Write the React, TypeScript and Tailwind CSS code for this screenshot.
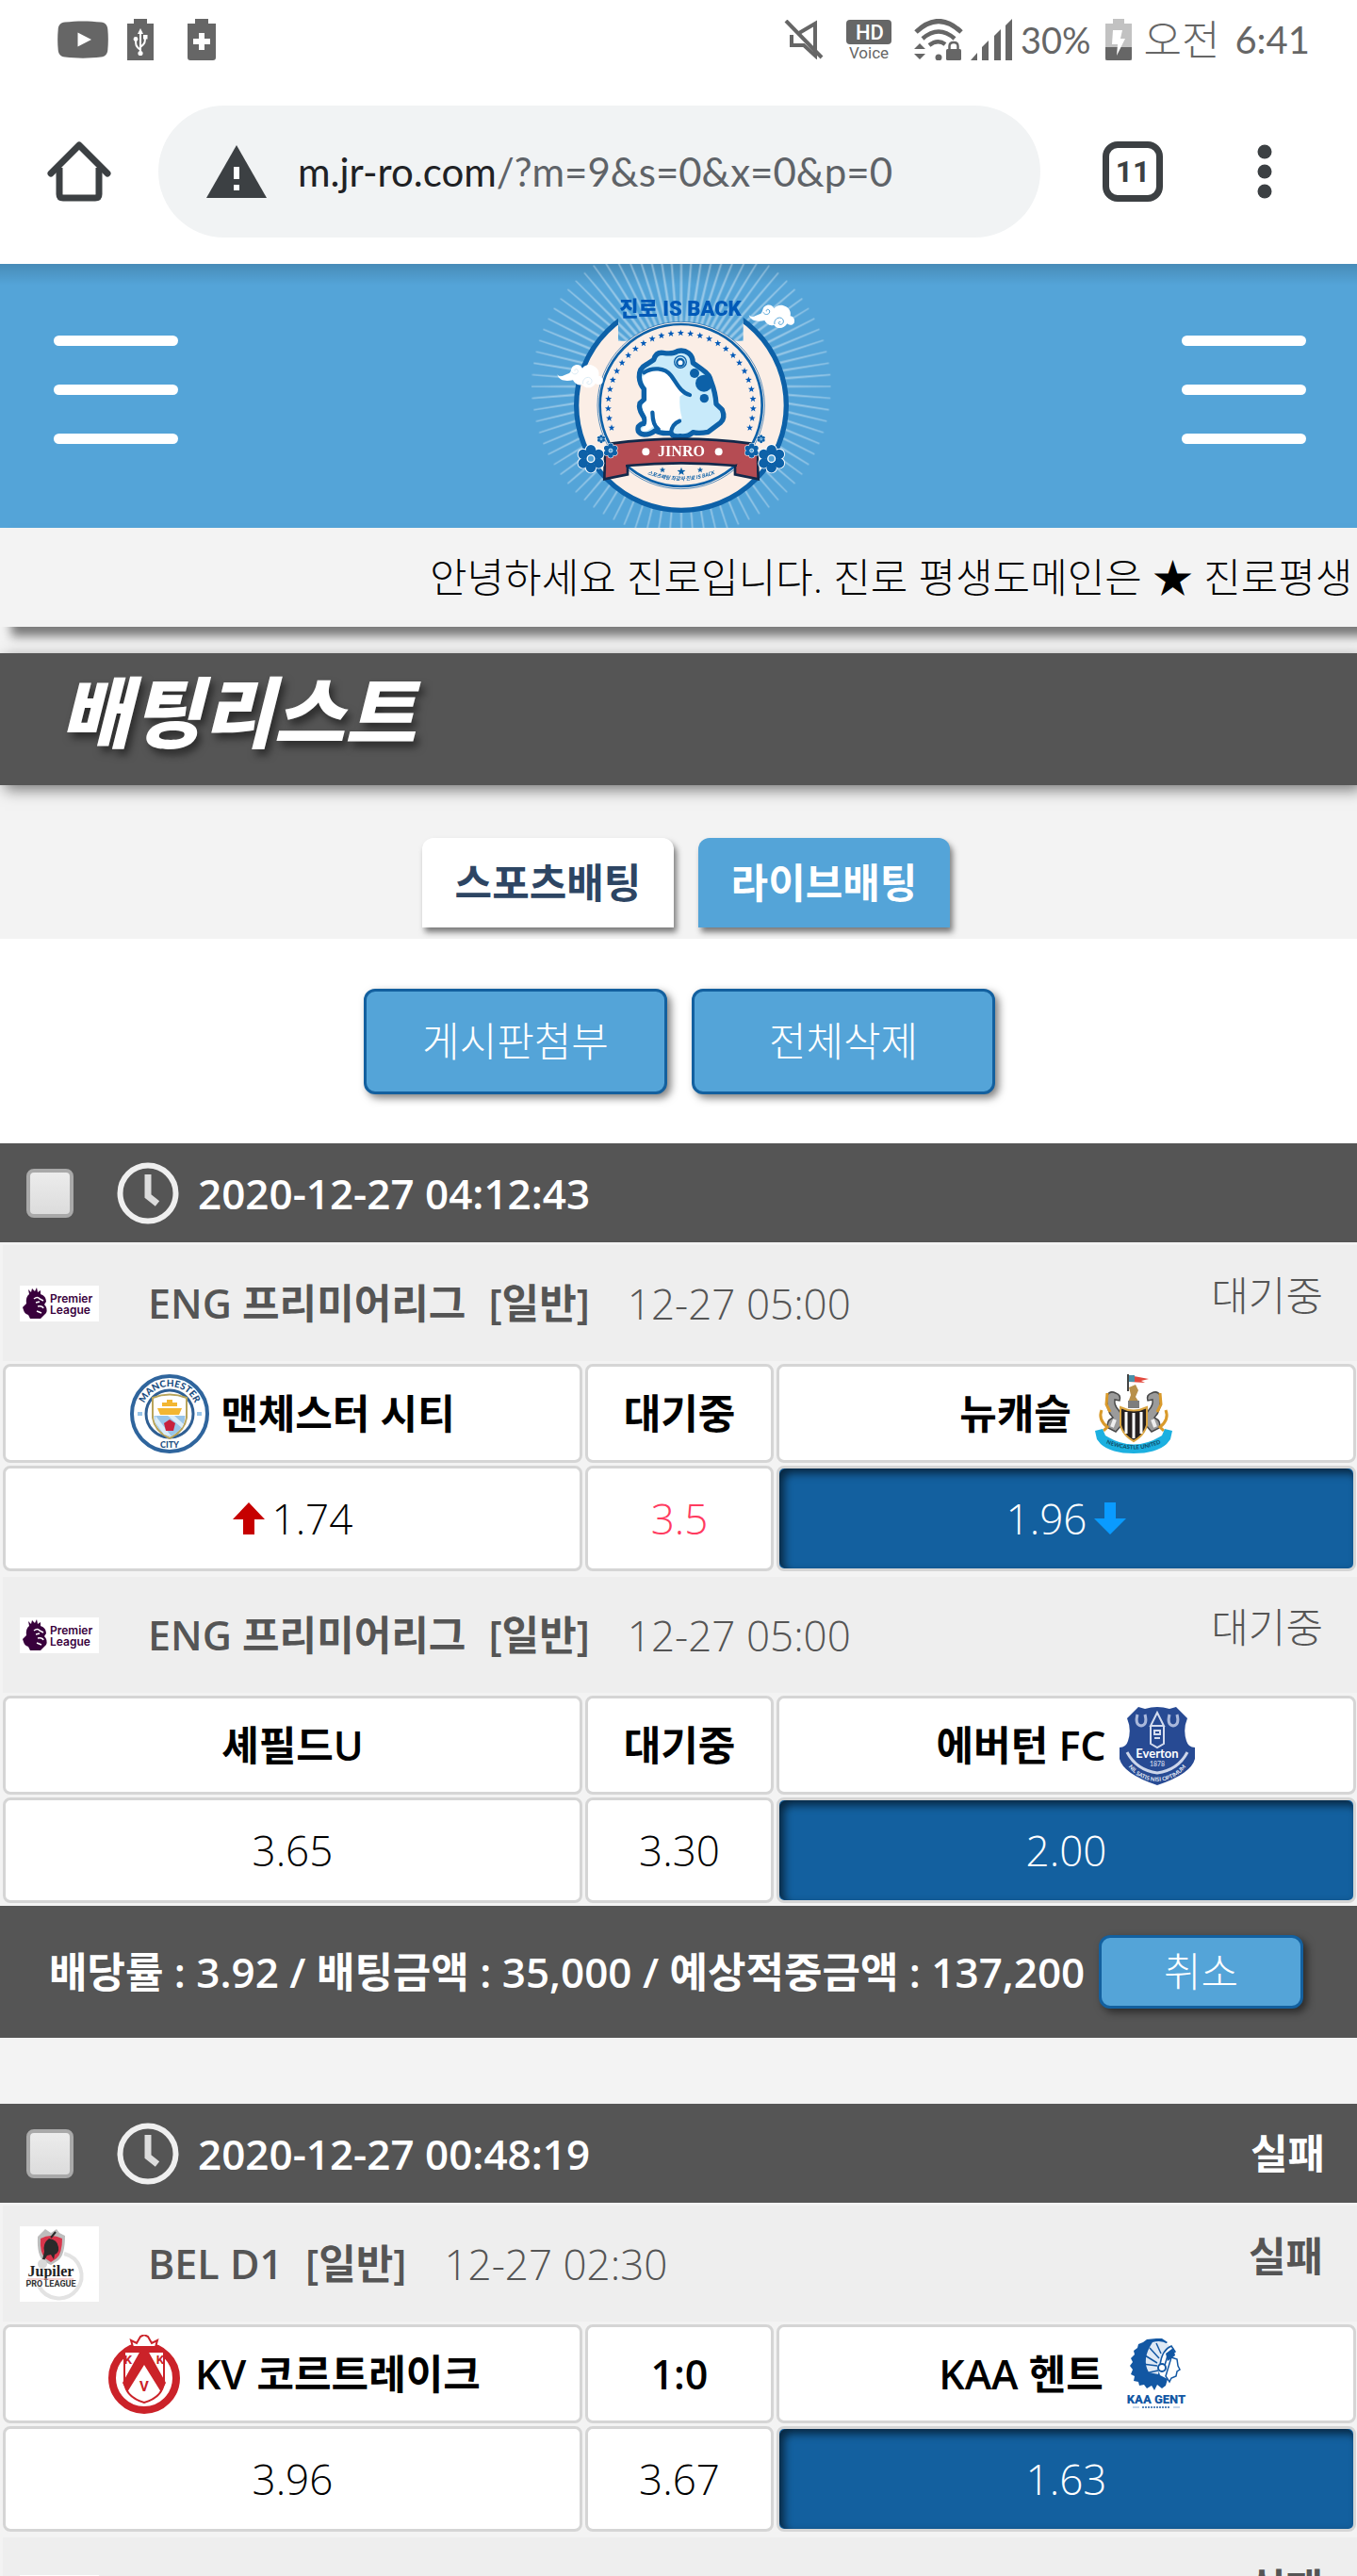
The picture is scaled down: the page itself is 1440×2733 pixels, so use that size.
import type { ReactNode } from "react";

function YoutubeIcon() {
    return (
        <svg className="w-[54px] h-[40px]" viewBox="0 0 54 40" fill="none">
            <path d="M8 1.500C20 0 34 0 46 1.500C51 2 53 5 53.300 9C54 16 54 24 53.300 31C53 35 51 38 46 38.500C34 40 20 40 8 38.500C3 38 1 35 .700 31C0 24 0 16 .700 9C1 5 3 2 8 1.500Z" fill="#666" />
            <path d="M21.500 12.500L36 20L21.500 27.500Z" fill="#fff" />
        </svg>
    );
}

function UsbBatteryIcon() {
    return (
        <svg className="w-[28px] h-[44px]" viewBox="0 0 28 44" fill="none">
            <path d="M7 0H21V5H28V44H0V5H7Z" fill="#666" />
            <path d="M14 13V36M14 33C9 29 9 28 9 22M14 30C19 26 19 25 19 19" stroke="#fff" strokeWidth="2" />
            <path d="M14 10L17 16H11Z" fill="#fff" />
            <circle cx="14" cy="36.500" r="2.600" fill="#fff" />
            <circle cx="9" cy="21.500" r="2.400" fill="#fff" />
            <rect x="17" y="17" width="4.500" height="4.500" fill="#fff" />
        </svg>
    );
}

function PlusBatteryIcon() {
    return (
        <svg className="w-[30px] h-[44px]" viewBox="0 0 30 44">
            <path d="M8 0H22V5H30V41Q30 44 27 44H3Q0 44 0 41V5H8Z" fill="#666" />
            <path d="M12 15H18V21H24V27H18V33H12V27H6V21H12Z" fill="#fff" />
        </svg>
    );
}

function MuteIcon() {
    return (
        <svg className="w-[42px] h-[42px]" viewBox="0 0 42 42" fill="none" stroke="#666" strokeWidth="4">
            <path d="M2 1L40 40" />
            <path d="M16 14L33 4V38L21 27H8V16" />
        </svg>
    );
}

function HdVoiceIcon() {
    return (
        <svg className="w-[48px] h-[48px]" viewBox="0 0 48 48">
            <rect x="0" y="3" width="48" height="26" rx="4" fill="#666" />
            <text x="25" y="24" textAnchor="middle" fontFamily="Roboto, sans-serif" fontSize="22" fontWeight="500" fill="#fff">HD</text>
            <text x="24" y="44" textAnchor="middle" fontFamily="Roboto, sans-serif" fontSize="17" fill="#666">Voice</text>
        </svg>
    );
}

function WifiIcon() {
    return (
        <svg className="w-[52px] h-[44px]" viewBox="0 0 52 44" fill="none">
            <path d="M2 14Q26 -9 50 14" stroke="#666" strokeWidth="5" />
            <path d="M9 21Q26 6 43 21" stroke="#666" strokeWidth="4.500" />
            <path d="M16 28Q25 21 33 27" stroke="#666" strokeWidth="4.500" />
            <circle cx="26" cy="41" r="3.500" fill="#666" />
            <path d="M0 32L6 26L12 32ZM0 37H12L6 43Z" fill="#666" />
            <rect x="34" y="32" width="16" height="12" rx="1.500" fill="#666" />
            <path d="M37.500 33V29Q37.500 25 42 25T46.500 29V33" stroke="#666" strokeWidth="2.500" />
        </svg>
    );
}

function SignalIcon() {
    return (
        <svg className="w-[45px] h-[44px]" viewBox="0 0 45 44" fill="#666">
            <path d="M0 44L7 36V44Z" />
            <path d="M12 30L19 23V44H12Z" />
            <path d="M25 18L32 11V44H25Z" />
            <path d="M37 7L44 0V44H37Z" />
        </svg>
    );
}

function ChargingIcon() {
    return (
        <svg className="w-[28px] h-[44px]" viewBox="0 0 28 44">
            <path d="M8 0H20V5H28V44H0V5H8Z" fill="#c2c2c2" />
            <path d="M0 30H28V42Q28 44 26 44H2Q0 44 0 42Z" fill="#666" />
            <path d="M8 12H18L16 21H21L12 39L13 27H7Z" fill="#fff" />
        </svg>
    );
}

function StatusBar() {
    return (
        <div className="flex items-center h-[84px] pl-[61px] pr-[50px] text-[#666]">
            <div className="flex items-center">
                <YoutubeIcon />
                <span className="ml-5"><UsbBatteryIcon /></span>
                <span className="ml-9"><PlusBatteryIcon /></span>
            </div>
            <div className="ml-auto flex items-center font-['Lato','Noto_Sans_CJK_KR',sans-serif] text-[44px] leading-none">
                <MuteIcon />
                <span className="ml-6"><HdVoiceIcon /></span>
                <span className="ml-6"><WifiIcon /></span>
                <span className="ml-2"><SignalIcon /></span>
                <span className="ml-2 text-[38px]">30%</span>
                <span className="ml-4"><ChargingIcon /></span>
                <span className="ml-3 font-light">오전</span>
                <span className="ml-4 text-[40px]">6:41</span>
            </div>
        </div>
    );
}

function AddressBar() {
    return (
        <div className="flex items-center h-[196px] pl-[50px] pr-[82px] text-[#3c4043]">
            <button type="button" aria-label="홈">
                <svg className="w-[68px] h-[68px]" viewBox="0 0 68 68" fill="none" stroke="#3c4043" strokeWidth="7">
                    <path d="M4 36L34 6L64 36" strokeLinejoin="round" strokeLinecap="round" />
                    <path d="M13 30V58Q13 62 17 62H51Q55 62 55 58V30" />
                </svg>
            </button>
            <div className="ml-[50px] flex items-center flex-1 h-[140px] rounded-full bg-[#f1f3f4] pl-[50px]">
                <svg className="w-[66px] h-[58px] shrink-0" viewBox="0 0 66 58">
                    <path d="M33 1L65 57H1Z" fill="#3c4043" />
                    <path d="M30 24H36V37H30ZM30 43H36V49H30Z" fill="#fff" />
                </svg>
                <a href="#" className="ml-8 font-['Lato',sans-serif] text-[42px] text-[#5f6368] whitespace-nowrap">
                    <span className="text-[#202124]">m.jr-ro.com</span>/?m=9&amp;s=0&amp;x=0&amp;p=0
                </a>
            </div>
            <button type="button" className="ml-[66px] w-[64px] h-[64px] rounded-2xl border-[7px] border-[#3c4043] flex items-center justify-center font-['Roboto',sans-serif] font-bold text-[32px] leading-none">
                11
            </button>
            <button type="button" aria-label="메뉴" className="ml-[92px] w-8">
                <svg className="w-8 h-[60px]" viewBox="0 0 32 60" fill="#3c4043">
                    <circle cx="16" cy="9" r="7.500" />
                    <circle cx="16" cy="30" r="7.500" />
                    <circle cx="16" cy="51" r="7.500" />
                </svg>
            </button>
        </div>
    );
}

function starPoints(cx: number, cy: number, r: number) {
    return Array.from({ length: 10 }, (_, i) => {
        const radius = i % 2 === 0 ? r : r * 0.42;
        const a = (i * Math.PI) / 5;
        return `${(cx + radius * Math.sin(a)).toFixed(1)},${(cy - radius * Math.cos(a)).toFixed(1)}`;
    }).join(" ");
}

function Flower({ cx, cy, r }: { cx: number; cy: number; r: number }) {
    const petals = Array.from({ length: 6 }, (_, i) => {
        const a = (i * Math.PI) / 3;
        return { x: cx + r * 0.62 * Math.sin(a), y: cy - r * 0.62 * Math.cos(a) };
    });
    return (
        <g>
            {petals.map((p, i) => <circle key={i} cx={p.x} cy={p.y} r={r * 0.4} fill="#fff" />)}
            {petals.map((p, i) => <circle key={i} cx={p.x} cy={p.y} r={r * 0.34} fill="#0d61a8" />)}
            <circle cx={cx} cy={cy} r={r * 0.42} fill="#0d61a8" />
            <circle cx={cx} cy={cy} r={r * 0.25} fill="#54a4d8" stroke="#fff" strokeWidth={r * 0.09} />
        </g>
    );
}

function Cloud({ x, y, swirl }: { x: number; y: number; swirl: string }) {
    return (
        <g transform={`translate(${x} ${y})`}>
            <path d="M0 32C8 44 22 34 38 28C46 22 42 12 50 6C60 -3 76 0 80 12C88 0 106 -2 118 6C132 14 134 26 132 36C142 36 148 48 144 58C136 68 126 64 122 60C112 78 88 78 80 64C66 70 56 60 50 50C30 54 6 54 0 32Z" fill="#fff" />
            <path d="M46 24C52 36 68 30 66 20C64 12 54 14 56 21" fill="none" stroke={swirl} strokeWidth="3" />
            <path d="M82 62C78 46 98 34 108 46C114 56 106 66 97 62C92 58 96 52 101 55" fill="none" stroke={swirl} strokeWidth="3" />
        </g>
    );
}

function JinroLogo() {
    return (
        <svg className="w-[360px] h-[280px]" viewBox="0 30 1080 840" role="img" aria-label="JINRO">
            <g fill="#fff" opacity="0.4">
                {Array.from({ length: 80 }, (_, i) => (
                    <path key={i} d="M538 250L541 -56H545L548 250Z" transform={`rotate(${i * 4.5} 543 420)`} />
                ))}
            </g>
            <clipPath id="badge">
                <path d="M0 30H342V275H740V30H1080V870H0Z" />
            </clipPath>
            <g clipPath="url(#badge)">
                <circle cx="543" cy="480" r="334" fill="#fbeee6" stroke="#0d61a8" strokeWidth="16" />
            </g>
            <circle cx="542" cy="480" r="266" fill="#fbeee6" stroke="#0d61a8" strokeWidth="2" />
            <circle cx="542" cy="480" r="258" fill="none" stroke="#0d61a8" strokeWidth="8" />
            {Array.from({ length: 29 }, (_, i) => {
                const a = ((i - 14) * 7.7 * Math.PI) / 180;
                return <polygon key={i} points={starPoints(541 + 231 * Math.sin(a), 481 - 231 * Math.cos(a), 11)} fill="#0059b8" />;
            })}
            <path d="M432 350L455 335Q462 310 485 313Q515 318 530 308Q550 302 566 314Q580 325 580 345L612 368Q634 382 638 405Q652 440 654 476L673 494Q684 520 668 535L628 565Q600 571 580 566Q562 582 540 578Q514 582 510 568Q480 572 460 560Q445 573 425 573Q400 570 406 548Q414 538 424 538Q430 525 420 512Q406 490 411 473L424 462V428Q410 412 409 390Q408 362 432 350Z" fill="#c8eafa" stroke="#0d61a8" strokeWidth="16" strokeLinejoin="round" />
            <path d="M420 390C440 362 490 364 508 388C525 410 532 430 552 442L538 452Q536 490 545 520L512 560Q470 560 452 548Q435 564 420 563Q412 552 430 545Q438 525 426 505Q414 485 422 475L433 465V425Q420 410 420 390Z" fill="#fff" />
            <path d="M424 376C450 358 490 360 510 385C528 408 540 440 570 447M451 503Q452 545 470 556M537 530Q512 540 510 568" fill="none" stroke="#0d61a8" strokeWidth="13" strokeLinecap="round" />
            <circle cx="540" cy="342" r="19" fill="#c8eafa" stroke="#0d61a8" strokeWidth="4" />
            <circle cx="540" cy="344" r="11" fill="#fff" stroke="#0d61a8" strokeWidth="7" />
            <circle cx="585" cy="378" r="15" fill="#0d61a8" />
            <circle cx="615" cy="410" r="27" fill="#0d61a8" />
            <circle cx="616" cy="458" r="14" fill="#0d61a8" />
            <g fill="#b54c53" stroke="#12294a" strokeWidth="8">
                <path d="M300 640L298 715L372 700V660Z" />
                <path d="M785 640L788 715L714 700V660Z" />
                <path d="M318 602Q543 572 766 602L778 660L714 672Q543 656 372 672L308 684Z" />
            </g>
            <path d="M304 630L303 706L366 692V668ZM782 630L783 706L720 692V668Z" fill="#b54c53" />
            <circle cx="430" cy="628" r="12" fill="#fff" />
            <circle cx="662" cy="628" r="12" fill="#fff" />
            <text x="543" y="641" textAnchor="middle" fontFamily="'Liberation Serif', serif" fontWeight="700" fontSize="48" fill="#fff">JINRO</text>
            <polygon points={starPoints(483, 686, 10)} fill="#0d61a8" />
            <polygon points={starPoints(543, 691, 14)} fill="#0d61a8" />
            <polygon points={starPoints(603, 686, 10)} fill="#0d61a8" />
            <path id="motto" d="M420 693Q543 745 664 693" fill="none" />
            <text fontFamily="'Noto Sans CJK KR', sans-serif" fontWeight="700" fontStyle="italic" fontSize="16" fill="#0d61a8">
                <textPath href="#motto" startOffset="50%" textAnchor="middle">스포츠배팅 최강자 진로 IS BACK</textPath>
            </text>
            <Flower cx={255} cy={650} r={46} />
            <Flower cx={830} cy={650} r={46} />
            <Flower cx={318} cy={624} r={24} />
            <Flower cx={767} cy={624} r={24} />
            <Flower cx={288} cy={587} r={14} />
            <Flower cx={797} cy={587} r={14} />
            <Cloud x={758} y={160} swirl="#54a4d8" />
            <Cloud x={148} y={350} swirl="#dcecf6" />
            <text x="540" y="196" textAnchor="middle" fontFamily="Roboto, 'Noto Sans CJK KR', sans-serif" fontWeight="900" fontSize="66" fill="#0059b8">진로 IS BACK</text>
        </svg>
    );
}

function MenuButton({ label }: { label: string }) {
    return (
        <button type="button" aria-label={label} className="mb-[14px] w-[132px] flex flex-col gap-[41px]">
            <span className="h-[11px] rounded-full bg-white" />
            <span className="h-[11px] rounded-full bg-white" />
            <span className="h-[11px] rounded-full bg-white" />
        </button>
    );
}

function PremierLogo() {
    return (
        <svg className="w-[84px] h-[38px] bg-white" viewBox="0 0 84 38" role="img" aria-label="Premier League">
            <path d="M10 9L9 4L12 7L13 3L16 6L18 2L19 7L22 5L22 9Q28 11 28 17L26 20Q30 24 28 29L24 33L22 35H11L9 31Q5 30 4 26L3 23L7 19Q6 12 10 9Z" fill="#38003c" />
            <path d="M15 14Q19 11 21 14L25 16M17 18L21 17M19 22Q24 21 25 24M18 27L23 29" stroke="#fff" strokeWidth="1.500" fill="none" />
            <text x="32" y="18" fontFamily="Inter, sans-serif" fontWeight="600" fontSize="12" fill="#38003c">Premier</text>
            <text x="32" y="30" fontFamily="Inter, sans-serif" fontWeight="600" fontSize="12" fill="#38003c">League</text>
        </svg>
    );
}

function JupilerLogo() {
    return (
        <svg className="w-[84px] h-[80px] bg-white" viewBox="0 0 84 80" role="img" aria-label="Jupiler Pro League">
            <path d="M47 29A24 24 0 1 1 20 63" fill="none" stroke="#e3e3e3" strokeWidth="4" />
            <path d="M19 11L24 6L27 3L33 7L39 3L42 7L48 10Q48 30 41 36L33 41L25 37Q18 30 19 11Z" fill="#bdbdbd" />
            <path d="M22 13Q33 7 45 13Q45 29 39 34L33 38L27 34Q21 28 22 13Z" fill="#d9354b" />
            <path d="M31 13Q40 14 41 22Q42 28 37 30L36 35L33 30L29 31L26 36L24 35L26 27Q24 18 31 13Z" fill="#2a2a2a" />
            <path d="M33 12L38 6M30 17Q36 15 38 20" fill="none" stroke="#2a2a2a" strokeWidth="2" />
            <circle cx="24" cy="40" r="5" fill="#d9d9d9" />
            <text x="33" y="53" textAnchor="middle" fontFamily="'Liberation Serif', serif" fontWeight="700" fontSize="16" fill="#222">Jupiler</text>
            <path d="M8 56H57" stroke="#e8a0a0" />
            <text x="33" y="64" textAnchor="middle" fontFamily="Roboto, sans-serif" fontWeight="700" fontSize="9" fill="#333">PRO LEAGUE</text>
        </svg>
    );
}

function ManCityCrest() {
    return (
        <svg className="w-[84px] h-[84px]" viewBox="0 0 84 84" role="img" aria-label="Manchester City">
            <circle cx="42" cy="42" r="40" fill="#fff" stroke="#2f659d" strokeWidth="4" />
            <circle cx="42" cy="42" r="25" fill="#fff" stroke="#2f5f93" strokeWidth="3" />
            <path id="mc-top" d="M13 42A29 29 0 0 1 71 42" fill="none" />
            <text fontFamily="Lato, sans-serif" fontWeight="900" fontSize="10" fill="#1c4f82">
                <textPath href="#mc-top" startOffset="50%" textAnchor="middle">MANCHESTER</textPath>
            </text>
            <text x="42" y="78" textAnchor="middle" fontFamily="Lato, sans-serif" fontWeight="900" fontSize="9" fill="#1c4f82">CITY</text>
            <path d="M24 25Q42 18 60 25V46Q58 60 42 68Q26 60 24 46Z" fill="#fff" stroke="#b8a45a" strokeWidth="2" />
            <path d="M25.500 44H58.500Q58 59 42 66.500Q26 59 25.500 44Z" fill="#98c5e9" />
            <path d="M26 50L36 64L44 66L27 44ZM40 44H47L57 53L55 57Z" fill="#d9ecf9" />
            <path d="M29 36H55L52 43H32ZM34 34V30H39V27H45V30H50V34Z" fill="#f2b632" />
            <polygon points="42,48 48,52 46,60 38,60 36,52" fill="#c8203c" />
            <path d="M8 42H13M71 42H76" stroke="#98c5e9" strokeWidth="4" />
        </svg>
    );
}

function NewcastleCrest() {
    return (
        <svg className="w-[84px] h-[84px]" viewBox="0 0 84 84" role="img" aria-label="Newcastle United">
            <path d="M36 0V18" stroke="#444" strokeWidth="2" />
            <path d="M37 1L58 5L50 7L54 9L37 8Z" fill="#e2483d" />
            <path d="M37 1H43V8H37Z" fill="#4a90a8" />
            <path d="M37 14L44 11L47 17L44 24L48 30H36L39 22Z" fill="#b8904a" />
            <path d="M36 28H48V36H36Z" fill="#7d7d7d" />
            <g>
                <path d="M14 22Q17 17 23 20Q29 22 27 28L22 27Q21 33 26 38Q32 45 29 54L23 61L15 57Q12 50 20 46Q12 38 14 22Z" fill="#9b9b9b" stroke="#4a4a4a" strokeWidth="1.500" />
                <path d="M14 20L13 32L17 40M8 38Q4 48 14 56L10 60" stroke="#d99a2b" strokeWidth="3" fill="none" />
                <path d="M22 48L19 56" stroke="#eee" strokeWidth="4" />
            </g>
            <g transform="translate(84 0) scale(-1 1)">
                <path d="M14 22Q17 17 23 20Q29 22 27 28L22 27Q21 33 26 38Q32 45 29 54L23 61L15 57Q12 50 20 46Q12 38 14 22Z" fill="#9b9b9b" stroke="#4a4a4a" strokeWidth="1.500" />
                <path d="M14 20L13 32L17 40M8 38Q4 48 14 56L10 60" stroke="#d99a2b" strokeWidth="3" fill="none" />
                <path d="M22 48L19 56" stroke="#eee" strokeWidth="4" />
            </g>
            <path d="M28 35Q42 42 56 35V54Q53 65 42 71Q31 65 28 54Z" fill="#241f20" stroke="#d9a441" strokeWidth="2" />
            <path d="M34 40V63M42 41V68M50 40V63" stroke="#fff" strokeWidth="3" />
            <path d="M1 60L9 58L12 65Q42 84 72 65L75 58L83 60L81 69L77 74Q66 84 42 84T7 74L3 69Z" fill="#1cb0e0" />
            <path id="nu-rib" d="M10 72Q42 87 74 72" fill="none" />
            <text fontFamily="Lato, sans-serif" fontWeight="900" fontSize="6" fill="#12506e">
                <textPath href="#nu-rib" startOffset="50%" textAnchor="middle">NEWCASTLE UNITED</textPath>
            </text>
        </svg>
    );
}

function EvertonCrest() {
    return (
        <svg className="w-[84px] h-[84px]" viewBox="0 0 84 84" role="img" aria-label="Everton">
            <path d="M22 1L29 3Q42 -1 55 3L62 1L74 13Q69 25 73 37Q75 44 82 44V56Q78 72 42 84Q6 72 2 56V44Q9 44 11 37Q15 25 10 13Z" fill="#274a93" />
            <path d="M10 49Q20 68 42 71Q64 68 74 49" fill="none" stroke="#cdd6ea" strokeWidth="3" />
            <path id="ev-rib" d="M6 56Q18 79 42 80Q66 79 78 56" fill="none" />
            <text fontFamily="Lato, sans-serif" fontWeight="700" fontSize="6" fill="#e6ebf5">
                <textPath href="#ev-rib" startOffset="50%" textAnchor="middle">NIL SATIS NISI OPTIMUM</textPath>
            </text>
            <path d="M42 7L35 21H49ZM35 21V40L42 44L49 40V21M39 26H45V30H39ZM39 34H45" fill="none" stroke="#d4dcee" strokeWidth="2" />
            <path d="M21 9Q18 20 25 21Q32 20 29 9M55 9Q52 20 59 21Q66 20 63 9" fill="none" stroke="#a9b8db" strokeWidth="3" />
            <text x="42" y="55" textAnchor="middle" fontFamily="Lato, sans-serif" fontWeight="700" fontSize="13" fill="#fff">Everton</text>
            <text x="42" y="64" textAnchor="middle" fontFamily="Lato, sans-serif" fontSize="7" fill="#cdd6ea">1878</text>
        </svg>
    );
}

function KortrijkCrest() {
    return (
        <svg className="w-[84px] h-[84px]" viewBox="0 0 84 84" role="img" aria-label="KV Kortrijk">
            <circle cx="42" cy="46" r="34" fill="#fff" stroke="#cb2229" strokeWidth="8" />
            <path d="M30 13L28 6L34 9L38 2L42 0L46 2L50 9L56 6L54 13Z" fill="#fff" stroke="#cb2229" strokeWidth="2" />
            <path d="M30 14H54V18H30Z" fill="#cb2229" />
            <path d="M21 18H63V50Q62 66 42 72Q22 66 21 50Z" fill="#fff" stroke="#cb2229" strokeWidth="2" />
            <path d="M38 17H46L65 51L60 61L42 32L24 61L19 51Z" fill="#cb2229" />
            <text x="25" y="31" textAnchor="middle" fontFamily="Roboto, sans-serif" fontWeight="700" fontSize="13" fill="#cb2229">K</text>
            <text x="59" y="31" textAnchor="middle" fontFamily="Roboto, sans-serif" fontWeight="700" fontSize="13" fill="#cb2229">K</text>
            <text x="42" y="60" textAnchor="middle" fontFamily="Roboto, sans-serif" fontWeight="700" fontSize="15" fill="#cb2229">V</text>
        </svg>
    );
}

function GentCrest() {
    return (
        <svg className="w-[84px] h-[84px]" viewBox="0 0 84 84" role="img" aria-label="KAA Gent">
            <path d="M44 4L34 5L30 8L25 10L24 14L20 17L21 21L17 25L19 29L16 33L19 37L17 42L21 44L20 49L25 50L26 54L31 53L34 57L39 54L42 59L45 53L50 57L54 54L56 47L48 43L44 30L47 16L56 8L50 4Z" fill="#1257a3" />
            <path d="M40 8Q56 4 62 18L50 22L46 42L36 40Q28 26 40 8Z" fill="#dfe9f5" />
            <path d="M45 30L32 22M45 33L29 31M46 38L32 41M47 25L37 14M49 20L44 9" stroke="#1257a3" strokeWidth="1.500" />
            <path d="M48 32Q50 16 60 12L64 18L56 22L52 36ZM60 24L66 26L67 33L69 37L66 39L65 44L60 46L58 50L54 44Z" fill="#fff" stroke="#1257a3" strokeWidth="1.500" />
            <path d="M54 20L62 14L64 22L56 28Z" fill="#1257a3" />
            <circle cx="50" cy="35" r="4" fill="#fff" stroke="#1257a3" strokeWidth="2" />
            <text x="44" y="73" textAnchor="middle" fontFamily="Roboto, sans-serif" fontWeight="900" fontSize="13" fill="#1257a3">KAA GENT</text>
            <path d="M19 77H26M62 77H69" stroke="#8fb0d4" />
            <path d="M29 77H59" stroke="#5b88bd" strokeWidth="2" strokeDasharray="2 1" />
        </svg>
    );
}

function ClockIcon() {
    return (
        <svg className="w-[66px] h-[66px]" viewBox="0 0 66 66" fill="none" stroke="#efefef">
            <circle cx="33" cy="33" r="29.500" strokeWidth="6" />
            <path d="M33 13V36L43 44" strokeWidth="7" stroke="#dcdcdc" />
        </svg>
    );
}

function Arrow({ up }: { up: boolean }) {
    return up ? (
        <svg className="w-[34px] h-[34px]" viewBox="0 0 34 34"><path d="M17 0L34 18H23V34H11V18H0Z" fill="#c60000" /></svg>
    ) : (
        <svg className="w-[34px] h-[34px]" viewBox="0 0 34 34"><path d="M17 34L0 17H11V0H23V17H34Z" fill="#0a9bff" /></svg>
    );
}

type Match = {
    logo: ReactNode;
    league?: string;
    kind?: string;
    date?: string;
    status: string;
    lost?: boolean;
    home?: ReactNode;
    score?: string;
    away?: ReactNode;
    odds?: [ReactNode, ReactNode, ReactNode];
};

function MatchBlock({ match }: { match: Match }) {
    return (
        <section>
            <div className="mt-[3px] ml-[3px] h-[123px] bg-[#eeeeee] flex items-center pl-[18px] pr-9 text-[#555]">
                <span className="w-[136px] shrink-0">{match.logo}</span>
                <b className="font-semibold">{match.league}</b>
                <b className="ml-6 font-semibold">{match.kind}</b>
                <time className="ml-10 font-light text-[44px]">{match.date}</time>
                <span className={match.lost ? "ml-auto pb-4 font-semibold" : "ml-auto pb-4 font-light"}>{match.status}</span>
            </div>
            {match.odds && (
                <table className="w-[calc(100%+2px)] table-fixed border-separate border-spacing-[3px] text-center text-black">
                    <colgroup>
                        <col className="w-[43%]" />
                        <col className="w-[14%]" />
                        <col className="w-[43%]" />
                    </colgroup>
                    <tbody>
                        <tr className="h-[105px] font-semibold">
                            {[match.home, match.score, match.away].map((cell, i) => (
                                <td key={i} className="p-0 rounded-lg border-[3px] border-[#d5d5d5] bg-white">
                                    <div className="flex items-center justify-center gap-3">{cell}</div>
                                </td>
                            ))}
                        </tr>
                        <tr className="h-[112px] font-light text-[44px]">
                            {match.odds.map((cell, i) => (
                                <td
                                    key={i}
                                    className={
                                        i === 2
                                            ? "p-0 rounded-lg border-[3px] border-[#d5d5d5] bg-[#13609f] text-white shadow-[inset_5px_5px_10px_rgba(0,0,0,0.6)]"
                                            : "p-0 rounded-lg border-[3px] border-[#d5d5d5] bg-white"
                                    }
                                >
                                    <div className="flex items-center justify-center gap-2">{cell}</div>
                                </td>
                            ))}
                        </tr>
                    </tbody>
                </table>
            )}
        </section>
    );
}

function TicketHeader({ id, time, result }: { id: string; time: string; result?: string }) {
    return (
        <header className="h-[105px] bg-[#555] text-white flex items-center pl-7 pr-[34px] font-semibold">
            <input
                id={id}
                type="checkbox"
                className="appearance-none w-[50px] h-[52px] rounded-lg border-4 border-[#a9a9a9] bg-linear-to-b from-[#ececec] to-[#dcdcdc]"
            />
            <label htmlFor={id} className="ml-[46px] flex items-center gap-5 text-[44px]">
                <ClockIcon />
                {time}
            </label>
            <span className="ml-auto">{result}</span>
        </header>
    );
}

const firstTicket: Match[] = [
    {
        logo: <PremierLogo />,
        league: "ENG 프리미어리그",
        kind: "[일반]",
        date: "12-27 05:00",
        status: "대기중",
        home: <><ManCityCrest />맨체스터 시티</>,
        score: "대기중",
        away: <><span className="mr-3">뉴캐슬</span><NewcastleCrest /></>,
        odds: [<><Arrow up />1.74</>, <span className="text-[#ff3b5f]">3.5</span>, <>1.96<Arrow up={false} /></>],
    },
    {
        logo: <PremierLogo />,
        league: "ENG 프리미어리그",
        kind: "[일반]",
        date: "12-27 05:00",
        status: "대기중",
        home: "셰필드U",
        score: "대기중",
        away: <>에버턴 FC<EvertonCrest /></>,
        odds: ["3.65", "3.30", "2.00"],
    },
];

const secondTicket: Match[] = [
    {
        logo: <JupilerLogo />,
        league: "BEL D1",
        kind: "[일반]",
        date: "12-27 02:30",
        status: "실패",
        lost: true,
        home: <><KortrijkCrest />KV 코르트레이크</>,
        score: "1:0",
        away: <>KAA 헨트<GentCrest /></>,
        odds: ["3.96", "3.67", "1.63"],
    },
    { logo: <span className="block w-[84px] h-[44px] bg-white" />, status: "실패", lost: true },
];

export default function App() {
    return (
        <div className="h-screen flex flex-col overflow-hidden bg-white font-['Open_Sans','Noto_Sans_CJK_KR',sans-serif] text-[43px] leading-[60px]">
            <StatusBar />
            <AddressBar />

            <main className="flex-1 min-h-0 overflow-hidden bg-[#f3f3f3]">
                <div className="h-[280px] bg-[#54a4d8] bg-linear-to-b from-black/15 from-0% to-transparent to-8% flex items-center justify-between pl-[57px] pr-[54px]">
                    <MenuButton label="왼쪽 메뉴" />
                    <JinroLogo />
                    <MenuButton label="오른쪽 메뉴" />
                </div>

                <div className="bg-[#f3f3f3] shadow-[12px_10px_10px_rgba(0,0,0,0.5)]">
                    <p className="h-[105px] overflow-hidden whitespace-nowrap pl-[456px] flex items-center font-light text-black">
                        안녕하세요 진로입니다. 진로 평생도메인은 ★ 진로평생
                    </p>
                </div>

                <div className="mt-7 h-[140px] bg-[#555] shadow-[5px_5px_15px_rgba(0,0,0,0.5)] flex items-center pl-16">
                    <h1 className="italic font-black text-[82px] leading-none text-white pb-4 [text-shadow:4px_6px_8px_rgba(0,0,0,0.5)]">배팅리스트</h1>
                </div>

                <nav className="h-[163px] flex justify-center items-end gap-[26px] pb-3 pl-4 font-semibold">
                    <button type="button" className="w-[267px] h-[95px] rounded-t-xl bg-white text-[#2d4563] shadow-[3px_5px_6px_rgba(0,0,0,0.5)]">스포츠배팅</button>
                    <button type="button" className="w-[267px] h-[95px] rounded-t-xl bg-[#54a4d8] text-white shadow-[3px_5px_6px_rgba(0,0,0,0.5)]">라이브배팅</button>
                </nav>

                <div className="h-[217px] bg-white flex items-center justify-center gap-[26px] pl-0.5 font-light">
                    <button type="button" className="w-[322px] h-[112px] rounded-xl border-[3px] border-[#13609f] bg-[#54a4d8] text-white shadow-[4px_4px_8px_rgba(0,0,0,0.5)]">게시판첨부</button>
                    <button type="button" className="w-[322px] h-[112px] rounded-xl border-[3px] border-[#13609f] bg-[#54a4d8] text-white shadow-[4px_4px_8px_rgba(0,0,0,0.5)]">전체삭제</button>
                </div>

                <article>
                    <TicketHeader id="ticket-1" time="2020-12-27 04:12:43" />
                    {firstTicket.map((match, i) => <MatchBlock key={i} match={match} />)}
                    <footer className="h-[140px] bg-[#555] text-white flex items-center justify-between pl-[52px] pr-[57px] font-semibold">
                        <p className="whitespace-nowrap text-[44px]">배당률 : 3.92 / 배팅금액 : 35,000 / 예상적중금액 : 137,200</p>
                        <button type="button" className="w-[217px] h-[78px] rounded-xl border-[3px] border-[#13609f] bg-[#54a4d8] font-light shadow-[4px_4px_8px_rgba(0,0,0,0.5)]">취소</button>
                    </footer>
                </article>

                <article className="mt-[70px]">
                    <TicketHeader id="ticket-2" time="2020-12-27 00:48:19" result="실패" />
                    {secondTicket.map((match, i) => <MatchBlock key={i} match={match} />)}
                </article>
            </main>
        </div>
    );
}
